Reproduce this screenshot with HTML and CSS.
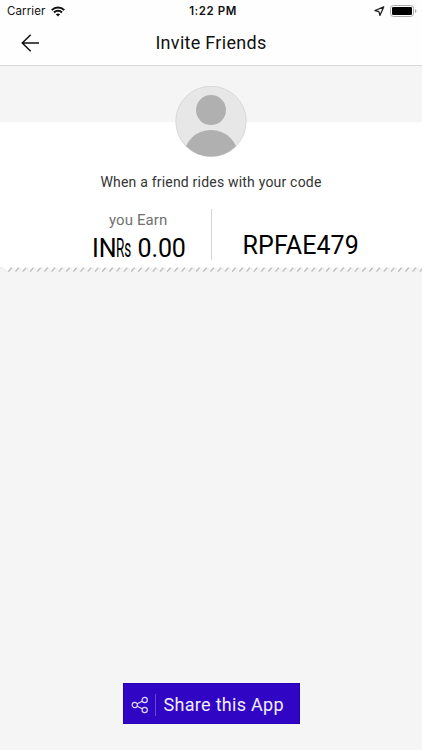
FILE: index.html
```html
<!DOCTYPE html>
<html lang="en">
<head>
<meta charset="utf-8">
<title>Invite Friends</title>
<link rel="stylesheet" href="styles.css">
</head>
<body>
<header class="top">
  <div class="status">
    <div class="carrier"><span>Carrier</span>
      <svg width="14" height="11" viewBox="0 0 14 11" fill="none" stroke="#111" stroke-width="2"><path d="M.7 4.1C4.2.5 9.8.5 13.3 4.1M3 6.5c2.2-2.2 5.8-2.2 8 0"/><path d="M4.8 8.3c1.3-1.2 3.1-1.2 4.4 0L7 10.5z" fill="#111" stroke="none"/></svg>
    </div>
    <div class="time">1:22 PM</div>
    <div class="indicators">
      <svg width="11" height="11" viewBox="0 0 11 11" fill="none" stroke="#222" stroke-width="1.3" stroke-linejoin="round"><path d="M9.7.9 1 4.5l3.9 1.1 1 3.8z"/></svg>
      <svg width="27" height="12" viewBox="0 0 27 12"><rect x=".5" y=".5" width="23" height="11" rx="3" fill="#fff" stroke="#aaa"/><rect x="2" y="2" width="20" height="8" rx="1.3" fill="#000"/><path d="M25 4c2 .7 2 3.3 0 4z" fill="#aaa"/></svg>
    </div>
  </div>
  <nav class="nav">
    <svg class="back" width="20" height="20" viewBox="0 0 20 20" fill="none" stroke="#111" stroke-width="1.5"><path d="M19 10H2M10.7 1.7 2.3 10l8.4 8.3"/></svg>
    <h1>Invite Friends</h1>
  </nav>
</header>
<main>
  <section class="card">
    <svg class="avatar" width="72" height="72" viewBox="0 0 72 72"><defs><clipPath id="round"><circle cx="36" cy="35.4" r="35.2"/></clipPath></defs><circle cx="36" cy="35.4" r="35.2" fill="#e7e7e7" stroke="#d2d2d2" stroke-width=".8"/><circle cx="36" cy="24.1" r="15" fill="#b0b0b0"/><circle cx="36" cy="71.4" r="27.5" fill="#b0b0b0" clip-path="url(#round)"/></svg>
    <p class="message">When a friend rides with your code</p>
    <div class="details">
      <div class="earn">
        <div class="label">you Earn</div>
        <div class="amount"><span>IN</span><span class="rupee"><span>Rs</span></span><span>0.00</span></div>
      </div>
      <div class="code">RPFAE479</div>
    </div>
  </section>
  <svg class="edge" width="422" height="7" viewBox="0 0 422 7">
    <defs><pattern id="teeth" x="7.3" width="7.22" height="7" patternUnits="userSpaceOnUse"><path d="M0 0h7.22L5 1.2.8 5.2 0 4z" fill="#fff"/><path d="M1 4.6 4.4 .6" stroke="#b5b5b5" stroke-width="1.4"/><path d="m4.8 .6 2.2 3" stroke="#e5e5e5" stroke-width=".6"/></pattern></defs>
    <path d="M0 0h8v5L0 .5z" fill="#fff"/><path d="M0 .3 2 .8 7.5 4.8" fill="none" stroke="#ddd" stroke-width=".7"/>
    <rect x="7.3" width="415" height="7" fill="url(#teeth)"/>
  </svg>
</main>
<footer>
  <button class="share" type="button">
    <svg width="18" height="18" viewBox="0 0 18 18" fill="none" stroke="#e2d9ff" stroke-width="1.2"><circle cx="3.8" cy="9" r="2.6"/><circle cx="13.7" cy="4" r="2.6"/><circle cx="13.7" cy="14" r="2.6"/><path d="m6.2 7.8 5.1-2.6m-5.1 5 5.1 2.6"/></svg>
    <span class="share-text">Share this App</span>
  </button>
</footer>
</body>
</html>
```
FILE: styles.css
```css
* { box-sizing: border-box; }
body {
  margin: 0;
  height: 750px;
  display: flex;
  flex-direction: column;
  background: #f5f5f5;
  color: #111;
  font-family: Roboto, sans-serif;
  overflow: hidden;
}
svg { display: block; flex: none; }
.top { height: 66px; background: #fefefe; border-bottom: 1px solid #d8d8d8; }
.status {
  height: 22px;
  display: grid;
  grid-template-columns: 1fr auto 1fr;
  align-items: center;
  padding: 0 5px 0 7px;
  font: 11.5px/22px Inter, sans-serif;
}
.carrier { display: flex; align-items: center; gap: 6px; letter-spacing: .1px; }
.time { font-weight: 600; letter-spacing: .55px; padding-left: 2px; }
.indicators { display: flex; justify-content: flex-end; align-items: center; gap: 5px; }
.nav { height: 42px; display: grid; grid-template-columns: 61px 1fr 61px; align-items: center; }
.back { margin-left: 20px; }
h1 { margin: 0; text-align: center; font-size: 18px; font-weight: 400; line-height: 24px; letter-spacing: .3px; }
main { flex: 1; padding-top: 56px; }
.card { height: 145px; background: #fff; display: flex; flex-direction: column; align-items: center; }
.avatar { margin-top: -36px; }
.message { margin: 14px 0 0; color: #333; font-size: 14px; line-height: 20px; letter-spacing: .2px; }
.details { width: 422px; height: 51px; margin-top: 17px; display: grid; grid-template-columns: 211.5px 1fr; grid-template-rows: 51px; }
.earn { border-right: 1px solid #d5d5d5; padding-left: 92px; }
.label { padding: 1px 0 0 17px; font-size: 15px; line-height: 20px; color: #707070; letter-spacing: .1px; }
.amount { display: flex; height: 30px; margin-top: 4px; color: #000; font-size: 25px; line-height: 30px; letter-spacing: -.1px; white-space: nowrap; }
.rupee { width: 21px; }
.rupee span { display: inline-block; transform: scaleX(.54); transform-origin: left; }
.code { padding: 22px 0 0 31px; font-size: 25px; line-height: 30px; letter-spacing: .1px; color: #000; white-space: nowrap; }
footer { height: 67px; display: flex; justify-content: center; align-items: flex-start; }
.share { width: 177px; height: 41px; display: flex; align-items: center; padding: 2px 0 0 7px; border: 1px solid #2500b5; background: #3006c4; color: #f2edff; font: 18px/24px Roboto, sans-serif; }
.share-text { height: 22px; display: flex; align-items: center; margin-left: 6px; padding-left: 8px; border-left: 1px solid #6546d5; letter-spacing: .3px; white-space: nowrap; }
```
